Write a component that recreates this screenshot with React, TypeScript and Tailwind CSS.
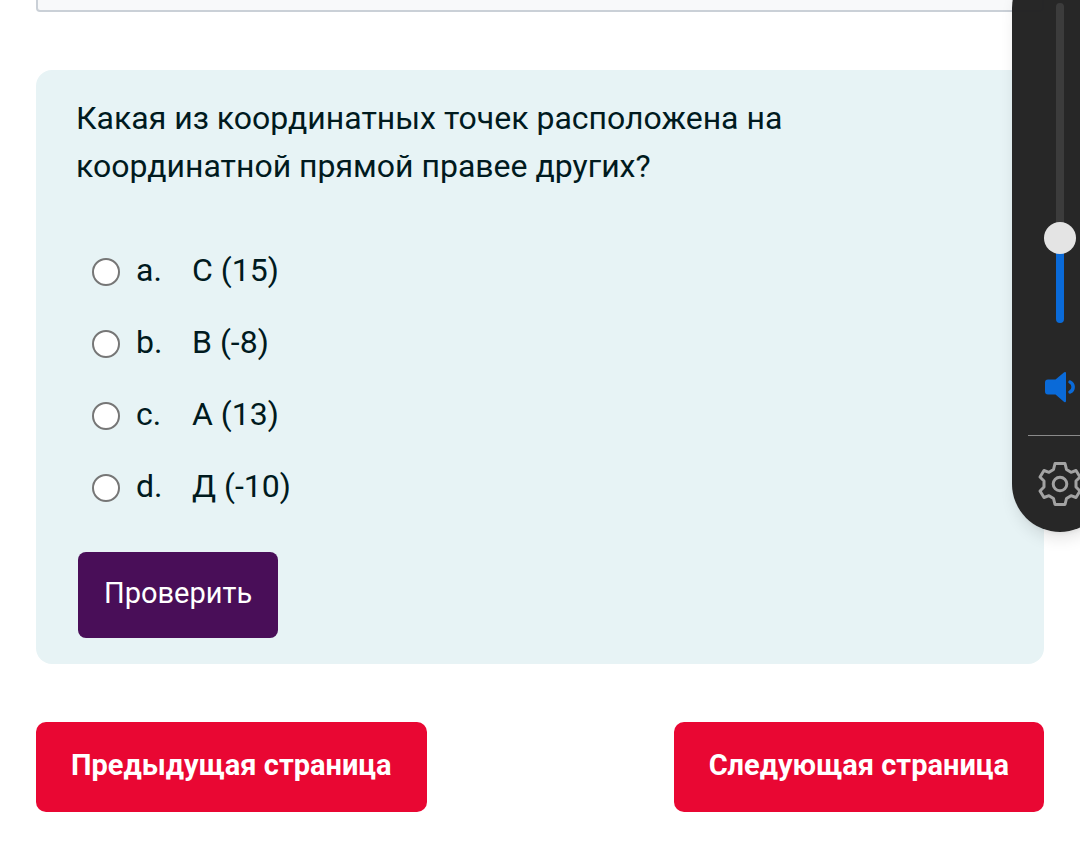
import { useState, type CSSProperties } from "react";

const options = [
  { id: "a", text: "С (15)" },
  { id: "b", text: "В (-8)" },
  { id: "c", text: "А (13)" },
  { id: "d", text: "Д (-10)" },
];

function SpeakerIcon() {
  return (
    <svg width="32" height="32" viewBox="0 0 32 32" aria-hidden="true">
      <path
        d="M4 8.5h7.500L20.200 1.300q1.800-1 1.800.8v28q0 1.800-1.800.8L11.500 23.500H4Q1 23.500 1 20.500V11.500Q1 8.500 4 8.500Z"
        fill="#0a6ad8"
      />
      <path
        d="M26 11c4.200 2 4.200 8 0 10"
        fill="none"
        stroke="#0a6ad8"
        strokeWidth="3.500"
        strokeLinecap="round"
      />
    </svg>
  );
}

function GearIcon() {
  return (
    <svg
      width="44"
      height="44"
      viewBox="0 0 44 44"
      fill="none"
      stroke="#a3a3a3"
      strokeWidth="3"
      strokeLinejoin="round"
      aria-hidden="true"
    >
      <path d="M17 1.500h10l1.500 6 4.500 2.800 5-1.800 4 6.500-4 4v6l4 4-4 6.500-5-1.800-4.500 2.800-1.500 6H17l-1.500-6L11 33.700 6 35.500 2 29l4-4v-6l-4-4 4-6.500 5 1.800 4.500-2.800Z" />
      <circle cx="22" cy="22" r="6.800" />
    </svg>
  );
}

function VolumePanel() {
  const [volume, setVolume] = useState(24);

  // the fill ends under the middle of the 32px thumb of the 320px track
  const fill = { "--fill": `${(volume / 100) * 288 + 16}px` } as CSSProperties;

  return (
    <aside className="fixed -top-10 -right-7 flex w-24 flex-col items-center rounded-full bg-[#232323]/98 pt-[43px] pb-[26px] shadow-lg">
      <input
        type="range"
        aria-label="Громкость"
        min={0}
        max={100}
        value={volume}
        onChange={(e) => setVolume(Number(e.target.value))}
        style={fill}
        className="h-80 w-2 appearance-none rounded-full bg-[linear-gradient(to_top,#0a6ad8_var(--fill),#3c3c3c_var(--fill))] [direction:rtl] [writing-mode:vertical-lr] [&::-webkit-slider-thumb]:size-8 [&::-webkit-slider-thumb]:appearance-none [&::-webkit-slider-thumb]:rounded-full [&::-webkit-slider-thumb]:bg-[#e4e4e4]"
      />
      <button type="button" aria-label="Звук" className="mt-12">
        <SpeakerIcon />
      </button>
      <hr className="mt-8 w-16 border-t border-[#8a8a8a]" />
      <button type="button" aria-label="Настройки" className="mt-[26px]">
        <GearIcon />
      </button>
    </aside>
  );
}

export default function App() {
  const [answer, setAnswer] = useState("");

  return (
    <div className="bg-white font-[Roboto,sans-serif] text-[#001a1e]">
      <main className="px-9">
        <div className="h-3 rounded-b border-2 border-t-0 border-[#cad0d7] bg-[#f8f9fa]" />

        <form
          className="mt-[58px] rounded-2xl bg-[#e7f3f5] px-10 pt-6 pb-[26px]"
          onSubmit={(e) => e.preventDefault()}
        >
          <fieldset>
            <legend className="max-w-[760px] text-[32px] leading-[48px]">
              Какая из координатных точек расположена на координатной прямой
              правее других?
            </legend>
            <div className="mt-14 flex flex-col gap-6 pl-4">
              {options.map((option) => (
                <label
                  key={option.id}
                  className="flex items-center text-[32px] leading-[48px]"
                >
                  <input
                    type="radio"
                    name="answer"
                    value={option.id}
                    checked={answer === option.id}
                    onChange={() => setAnswer(option.id)}
                    className="mt-1 mr-4 size-7 appearance-none rounded-full border-2 border-[#767676] bg-white checked:border-8 checked:border-[#0a6ad8]"
                  />
                  <span className="w-14">{option.id}.</span>
                  <span>{option.text}</span>
                </label>
              ))}
            </div>
          </fieldset>
          <button
            type="submit"
            className="mt-[42px] ml-0.5 rounded-lg bg-[#490e58] px-[26px] pt-[17px] pb-[21px] text-[29px] leading-[48px] text-white"
          >
            Проверить
          </button>
        </form>

        <nav className="mt-[58px] flex justify-between pb-[52px]">
          <a
            href="#prev"
            className="rounded-[10px] bg-[#e90733] px-[35px] pt-[19px] pb-[23px] text-[29px] leading-[48px] font-bold text-white"
          >
            Предыдущая страница
          </a>
          <a
            href="#next"
            className="rounded-[10px] bg-[#e90733] px-[35px] pt-[19px] pb-[23px] text-[29px] leading-[48px] font-bold text-white"
          >
            Следующая страница
          </a>
        </nav>
      </main>

      <VolumePanel />
    </div>
  );
}
